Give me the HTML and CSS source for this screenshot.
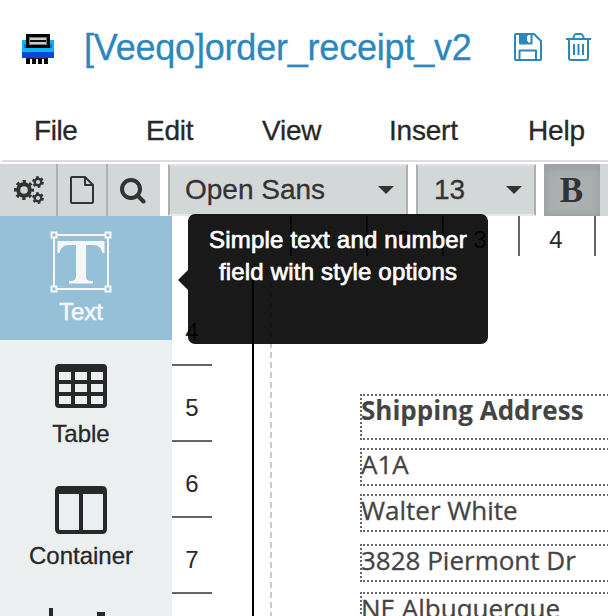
FILE: index.html
```html
<!DOCTYPE html>
<html lang="en">
<head>
<meta charset="utf-8">
<title>[Veeqo]order_receipt_v2</title>
<link rel="stylesheet" href="styles.css">
</head>
<body>
<header class="header">
  <svg class="logo" width="32" height="30" viewBox="0 0 32 30" shape-rendering="crispEdges">
    <path fill="#0ab4f0" d="M0 6h32v12H0z"/>
    <path fill="#0648d8" d="M0 18h32v6H0z"/>
    <path fill="#0674d0" d="M2 10h28v4H2z"/>
    <path fill="#000" d="M4 0h24v14H4zM4 24h4v6H4zM10 24h4v6h-4zM16 24h4v6h-4zM22 24h4v6h-4z"/>
    <path fill="#222" d="M4 24h22v1H4z"/>
    <path fill="#777" d="M7 3h18v8H7z"/>
    <path fill="#ccc" d="M8 4h16v2H8zM8 8h16v2H8z"/>
    <path fill="#111" d="M8 6h16v2H8z"/>
  </svg>
  <h1 class="title">[Veeqo]order_receipt_v2</h1>
  <svg class="save" width="28" height="28" viewBox="0 0 28 28" fill="none" stroke="#2c87bd" stroke-width="2" stroke-linejoin="round">
    <path d="M2 1h18l7 7v18a1 1 0 0 1-1 1H2a1 1 0 0 1-1-1V2a1 1 0 0 1 1-1z"/>
    <path d="M6 1v9.500h11.500V1M5.500 27v-9.500h16.500V27"/>
    <path fill="#2c87bd" stroke="none" d="M6 1h8v2h-1v5h1v3H6z"/>
  </svg>
  <svg class="trash" width="26" height="28" viewBox="0 0 26 28" fill="none" stroke="#2c87bd" stroke-width="2">
    <path d="M0 6h25M7 6l1-3q.6-2 2-2h5q1.400 0 2 2l1 3M3 6v19q0 2 2 2h15q2 0 2-2V6M8 11v11M12.500 11v11M17 11v11"/>
  </svg>
</header>
<nav class="menu">
  <span class="file">File</span><span class="edit">Edit</span><span class="view">View</span><span class="insert">Insert</span><span>Help</span>
</nav>
<div class="toolbar">
  <div class="group">
    <div class="tool gears">
      <svg width="30" height="28" viewBox="0 0 30 28" fill="none" stroke="#333">
        <circle cx="10" cy="14" r="5.800" stroke-width="4"/>
        <circle cx="10" cy="14" r="8.500" stroke-width="3" stroke-dasharray="3.340 3.340" stroke-dashoffset="1.670"/>
        <circle cx="24" cy="6" r="3.300" stroke-width="2.400"/>
        <circle cx="24" cy="6" r="4.900" stroke-width="2" stroke-dasharray="2.566 2.566"/>
        <circle cx="24" cy="22" r="3.300" stroke-width="2.400"/>
        <circle cx="24" cy="22" r="4.900" stroke-width="2" stroke-dasharray="2.566 2.566"/>
      </svg>
    </div>
    <div class="tool page">
      <svg width="24" height="28" viewBox="0 0 24 28" fill="none" stroke="#333" stroke-width="2" stroke-linejoin="round">
        <path d="M2 1h13l8 8v17a1 1 0 0 1-1 1H2a1 1 0 0 1-1-1V2a1 1 0 0 1 1-1zM15 1v8h8"/>
      </svg>
    </div>
    <div class="tool find">
      <svg width="26" height="26" viewBox="0 0 26 26" fill="none" stroke="#333" stroke-width="4" stroke-linecap="round">
        <circle cx="11" cy="11" r="9"/><path d="M17.500 17.500l6 6"/>
      </svg>
    </div>
  </div>
  <div class="select family"><span>Open Sans</span><i class="caret"></i></div>
  <div class="select size"><span>13</span><i class="caret"></i></div>
  <div class="bold">B</div>
  <div class="next"></div>
</div>
<main class="body">
  <aside class="sidebar">
    <div class="item active">
      <svg width="62" height="62" viewBox="0 0 62 62" fill="none" stroke="#f5f7f8" stroke-width="2">
        <path d="M7 4h48M7 58h48M4 7v48M58 7v48"/>
        <path d="M1.500 1.500h5v5h-5zM55.500 1.500h5v5h-5zM1.500 55.500h5v5h-5zM55.500 55.500h5v5h-5z"/>
        <path fill="#f5f7f8" stroke="none" d="M7.500 10h47v12h-2c-1-5-4-8-9-8H36v32c0 3 2 4 7 4v2.500H19V50c5 0 7-1 7-4V14h-7.500c-5 0-8 3-9 8h-2z"/>
      </svg>
      <span>Text</span>
    </div>
    <div class="item table">
      <svg width="52" height="44" viewBox="0 0 52 44" fill="#282828">
        <path fill-rule="evenodd" d="M4 0h44q4 0 4 4v36q0 4-4 4H4q-4 0-4-4V4q0-4 4-4zM4 8v8h12V8zM20 8v8h12V8zM36 8v8h12V8zM4 20v8h12v-8zM20 20v8h12v-8zM36 20v8h12v-8zM4 32v8h12v-8zM20 32v8h12v-8zM36 32v8h12v-8z"/>
      </svg>
      <span>Table</span>
    </div>
    <div class="item container">
      <svg width="52" height="48" viewBox="0 0 52 48" fill="#282828">
        <path fill-rule="evenodd" d="M5 0h42q5 0 5 5v38q0 5-5 5H5q-5 0-5-5V5q0-5 5-5zM4 8v35q0 1 1 1h19V8zM28 8v36h19q1 0 1-1V8z"/>
      </svg>
      <span>Container</span>
    </div>
    <div class="item chart">
      <svg width="64" height="56" viewBox="0 0 64 56" fill="#282828">
        <path d="M0 0h4v52h60v4H0zM12 28h8v20h-8zM24 16h8v32h-8zM36 22h8v26h-8zM48 4h8v44h-8z"/>
      </svg>
    </div>
  </aside>
  <section class="workspace">
    <div class="ruler-x"><span></span><span>1</span><span>2</span><span>3</span><span>4</span></div>
    <div class="lower">
      <div class="ruler-y"><span>4</span><span>5</span><span>6</span><span>7</span></div>
      <div class="sheet">
        <div class="margin">
          <div class="field heading">Shipping Address</div>
          <div class="field">A1A</div>
          <div class="field">Walter White</div>
          <div class="field street">3828 Piermont Dr</div>
          <div class="field city">NE Albuquerque</div>
        </div>
      </div>
    </div>
  </section>
  <div class="tooltip">Simple text and number<br>field with style options</div>
</main>
</body>
</html>
```
FILE: styles.css
```css
* { box-sizing: border-box; }
body {
  margin: 0;
  width: 608px;
  height: 616px;
  overflow: hidden;
  background: #fff;
  color: #282828;
  font-family: "Liberation Sans", Arial, sans-serif;
}
svg { display: block; flex: none; }

.header { display: flex; height: 96px; padding: 28px 0 0 22px; align-items: flex-start; }
.logo { margin: 6px 30px 0 0; }
.title {
  width: 430px;
  margin: 0;
  color: #2c87bd;
  font-size: 36px;
  font-weight: 400;
  line-height: 40px;
  letter-spacing: -0.2px;
  white-space: nowrap;
  -webkit-text-stroke: .3px #2c87bd;
}
.save { margin: 5px 24px 0 0; }
.trash { margin-top: 5px; }

.menu {
  display: flex;
  height: 66px;
  margin-left: 2px;
  padding: 15px 0 0 32px;
  border-bottom: 2px solid #ddd;
  font-size: 28px;
  line-height: 40px;
  letter-spacing: -.2px;
  -webkit-text-stroke: .3px #282828;
}
.menu span { flex: none; }
.file { width: 112px; letter-spacing: -.4px; }
.edit { width: 116px; }
.view { width: 127px; }
.insert { width: 139px; }

.toolbar { display: flex; height: 54px; padding-top: 2px; color: #333; }
.group { display: flex; width: 160px; margin-right: 8px; background: #d3d7d8; }
.tool { width: 50px; padding-top: 12px; }
.gears { width: 58px; padding-left: 14px; border-right: 2px solid #acb0b1; }
.page { padding-left: 12px; border-right: 2px solid #acb0b1; }
.find { padding: 14px 0 0 12px; }
.select {
  display: flex;
  justify-content: space-between;
  align-items: center;
  height: 52px;
  margin-right: 8px;
  padding: 0 12px 0 15px;
  border: 2px solid #acb0b1;
  border-top-color: #dfe2e2;
  border-bottom-color: #e8eaea;
  background: #d3d7d8;
  font-size: 28px;
  line-height: 40px;
  -webkit-text-stroke: .3px #333;
}
.family { width: 240px; }
.size { width: 120px; padding-left: 16px; }
.caret { border: 8px solid transparent; border-top-color: #333; border-bottom: 0; }
.bold {
  width: 56px;
  padding-right: 3px;
  border: 2px solid #9fa3a4;
  border-right: 0;
  background: #abafb0;
  box-shadow: inset 0 2px 8px rgba(0, 0, 0, .12);
  font: 700 35px/49px "Liberation Serif", serif;
  text-align: center;
}
.next { width: 8px; background: #d3d7d8; }

.body { position: relative; display: flex; height: 400px; }
.sidebar { width: 172px; height: 400px; overflow: hidden; background: #ebeff0; font-size: 24px; line-height: 32px; -webkit-text-stroke: .3px; }
.item { display: flex; flex-direction: column; align-items: center; height: 122px; padding-right: 10px; }
.active { height: 124px; padding-top: 15px; background: #95c0d8; color: #f5f7f8; -webkit-text-stroke: .6px #f5f7f8; }
.active span { margin-top: 3px; }
.table { padding-top: 24px; }
.table span { margin-top: 10px; }
.container { padding-top: 24px; }
.container span { margin-top: 6px; }
.chart { padding-top: 24px; }

.workspace { width: 436px; height: 400px; overflow: hidden; }
.ruler-x { display: flex; height: 40px; padding-left: 44px; font-size: 24px; line-height: 48px; text-align: center; }
.ruler-x span { flex: none; width: 76px; padding-right: 2px; border-right: 2px solid #666; }
.lower { display: flex; }
.ruler-y { flex: none; width: 80px; height: 360px; padding-top: 34px; font-size: 24px; line-height: 84px; text-align: center; }
.ruler-y span { display: block; width: 40px; height: 76px; border-bottom: 2px solid #666; }
.sheet { flex: 1; min-width: 0; margin-top: 24px; border-left: 2px solid #000; }
.margin {
  margin-left: 16px;
  height: 336px;
  padding: 114px 0 0 90px;
  background: repeating-linear-gradient(to bottom, transparent 0 2px, #ccc 2px 8px, transparent 8px 10px) 0 0 / 2px 100% no-repeat;
}
.field {
  width: 260px;
  height: 38px;
  margin-bottom: 8px;
  border: 2px dotted #666;
  color: #444;
  font-family: "Open Sans", "Noto Sans", sans-serif;
  font-size: 26px;
  line-height: 28px;
  text-indent: -1px;
  white-space: nowrap;
  -webkit-text-stroke: .3px #444;
}
.heading { height: 46px; font-weight: 700; -webkit-text-stroke: 0; }
.street { margin-top: 12px; margin-bottom: 10px; }

.tooltip {
  position: absolute;
  left: 188px;
  top: -2px;
  width: 300px;
  height: 130px;
  padding-top: 10px;
  border-radius: 7px;
  background: rgba(0, 0, 0, .9);
  color: #fff;
  font-size: 24px;
  line-height: 32px;
  letter-spacing: .2px;
  text-align: center;
  white-space: nowrap;
  -webkit-text-stroke: .7px #fff;
}
.tooltip::before {
  content: "";
  position: absolute;
  left: -10px;
  top: 56px;
  border: 10px solid transparent;
  border-left: 0;
  border-right-color: rgba(0, 0, 0, .9);
}
```
